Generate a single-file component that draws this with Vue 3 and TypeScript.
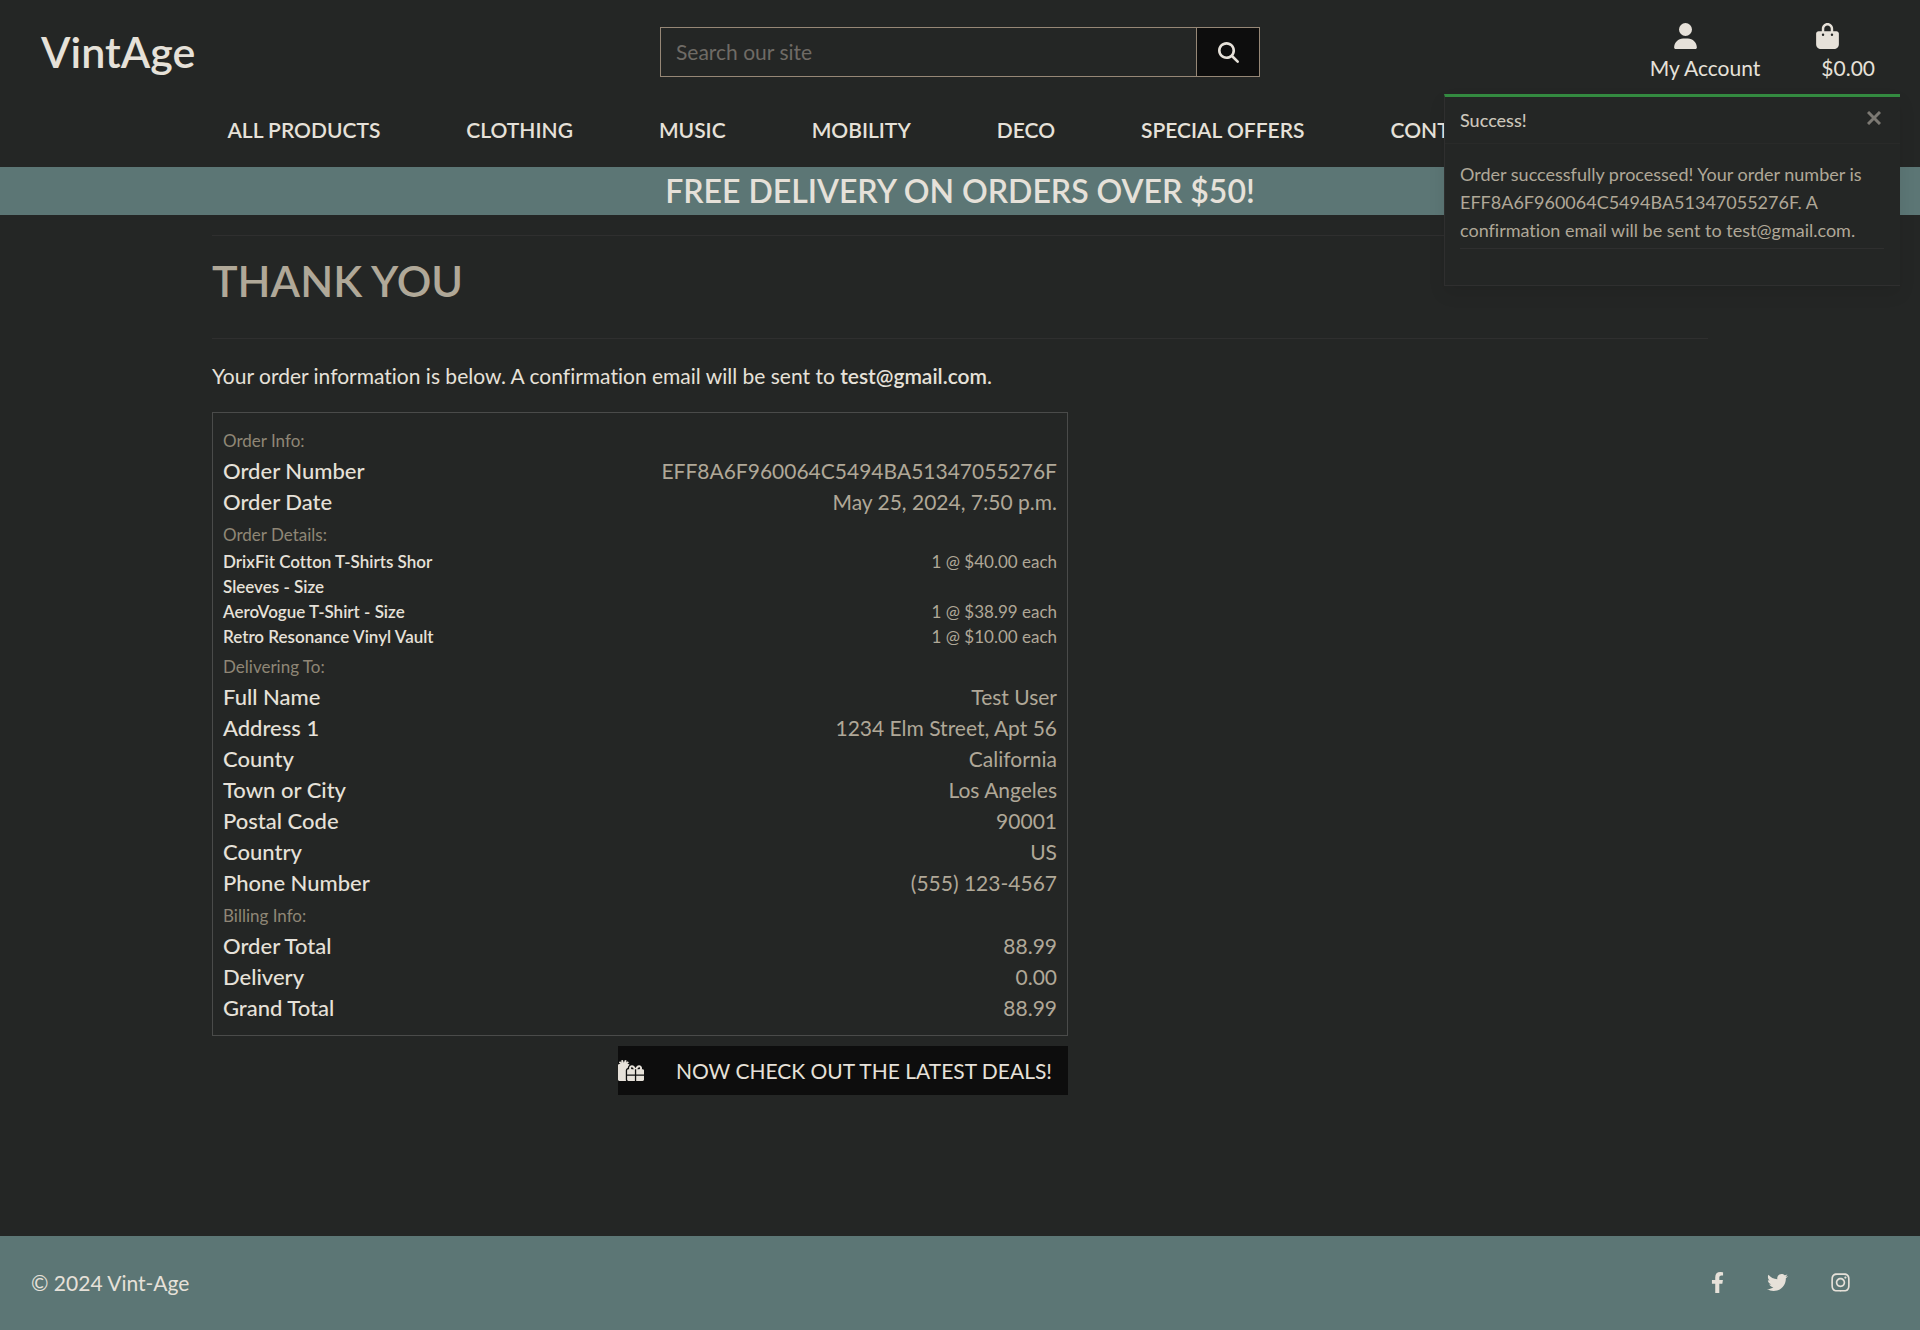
<script setup lang="ts">
import { ref } from 'vue'

interface Entry {
  label: string
  value: string
}

interface Section {
  title: string
  small?: boolean
  entries: Entry[]
}

const orderNumber = 'EFF8A6F960064C5494BA51347055276F'
const email = 'test@gmail.com'
const query = ref('')
const toastOpen = ref(true)

const navItems: string[] = [
  'All Products',
  'Clothing',
  'Music',
  'Mobility',
  'Deco',
  'Special Offers',
  'Contact',
]

const sections: Section[] = [
  {
    title: 'Order Info:',
    entries: [
      { label: 'Order Number', value: orderNumber },
      { label: 'Order Date', value: 'May 25, 2024, 7:50 p.m.' },
    ],
  },
  {
    title: 'Order Details:',
    small: true,
    entries: [
      { label: 'DrixFit Cotton T-Shirts Shor Sleeves - Size', value: '1 @ $40.00 each' },
      { label: 'AeroVogue T-Shirt - Size', value: '1 @ $38.99 each' },
      { label: 'Retro Resonance Vinyl Vault', value: '1 @ $10.00 each' },
    ],
  },
  {
    title: 'Delivering To:',
    entries: [
      { label: 'Full Name', value: 'Test User' },
      { label: 'Address 1', value: '1234 Elm Street, Apt 56' },
      { label: 'County', value: 'California' },
      { label: 'Town or City', value: 'Los Angeles' },
      { label: 'Postal Code', value: '90001' },
      { label: 'Country', value: 'US' },
      { label: 'Phone Number', value: '(555) 123-4567' },
    ],
  },
  {
    title: 'Billing Info:',
    entries: [
      { label: 'Order Total', value: '88.99' },
      { label: 'Delivery', value: '0.00' },
      { label: 'Grand Total', value: '88.99' },
    ],
  },
]
</script>

<template>
  <div class="page">
    <header class="header">
      <div class="topbar">
        <a class="logo" href="#">VintAge</a>

        <form class="search" role="search" @submit.prevent>
          <input v-model="query" class="search-input" type="text" placeholder="Search our site" aria-label="Search our site" />
          <button class="search-button" type="submit" aria-label="Search">
            <svg viewBox="0 0 512 512" width="21" height="21" fill="currentColor" aria-hidden="true">
              <path d="M416 208c0 45.9-14.9 88.3-40 122.7L502.6 457.4c12.5 12.5 12.5 32.8 0 45.3s-32.8 12.5-45.3 0L330.7 376c-34.4 25.2-76.8 40-122.7 40C93.1 416 0 322.9 0 208S93.1 0 208 0S416 93.1 416 208zM208 352a144 144 0 1 0 0-288 144 144 0 1 0 0 288z" />
            </svg>
          </button>
        </form>

        <div class="account">
          <a class="account-link" href="#">
            <svg viewBox="0 0 448 512" width="23" height="26" fill="currentColor" aria-hidden="true">
              <path d="M224 256A128 128 0 1 0 224 0a128 128 0 1 0 0 256zm-45.7 48C79.8 304 0 383.8 0 482.3C0 498.7 13.3 512 29.7 512H418.3c16.4 0 29.7-13.3 29.7-29.7C448 383.8 368.2 304 269.7 304H178.3z" />
            </svg>
            <span class="account-text">My Account</span>
          </a>
          <a class="account-link bag-link" href="#">
            <svg viewBox="0 0 448 512" width="23" height="26" fill="currentColor" aria-hidden="true">
              <path d="M160 112c0-35.3 28.7-64 64-64s64 28.7 64 64v48H160V112zm-48 48H48c-26.5 0-48 21.5-48 48V416c0 53 43 96 96 96H352c53 0 96-43 96-96V208c0-26.5-21.5-48-48-48H336V112C336 50.1 285.9 0 224 0S112 50.1 112 112v48zm24 48a24 24 0 1 1 0 48 24 24 0 1 1 0-48zm152 24a24 24 0 1 1 48 0 24 24 0 1 1 -48 0z" />
            </svg>
            <span class="account-text">$0.00</span>
          </a>
        </div>
      </div>

      <nav class="nav" aria-label="Main">
        <a v-for="item in navItems" :key="item" class="nav-link" href="#">{{ item }}</a>
      </nav>

      <section v-if="toastOpen" class="toast" role="status">
        <div class="toast-header">
          <strong class="toast-title">Success!</strong>
          <button class="toast-close" type="button" aria-label="Close" @click="toastOpen = false">
            <svg viewBox="0 0 14 14" width="14" height="14" fill="none" stroke="currentColor" stroke-width="3" aria-hidden="true">
              <path d="M1 1l12 12M13 1L1 13" />
            </svg>
          </button>
        </div>
        <div class="toast-body">
          <p class="toast-text">
            Order successfully processed! Your order number is {{ orderNumber }}. A confirmation email will be sent to {{ email }}.
          </p>
        </div>
      </section>
    </header>

    <div class="banner">
      <h2 class="banner-title">Free delivery on orders over $50!</h2>
    </div>

    <main class="main">
      <h1 class="title">Thank You</h1>
      <p class="intro">
        Your order information is below. A confirmation email will be sent to <strong>{{ email }}</strong>.
      </p>

      <div class="order">
        <div class="order-box">
          <section v-for="section in sections" :key="section.title" :class="{ small: section.small }">
            <h3 class="section-title">{{ section.title }}</h3>
            <dl class="entries">
              <div v-for="entry in section.entries" :key="entry.label" class="entry">
                <dt>{{ entry.label }}</dt>
                <dd>{{ entry.value }}</dd>
              </div>
            </dl>
          </section>
        </div>

        <a class="deals" href="#">
          <svg viewBox="0 0 640 512" width="26" height="21" fill="currentColor" aria-hidden="true">
            <path d="M240.6 194.1c1.9-30.8 17.3-61.2 44-79.8C279.4 103.5 268.7 96 256 96h-29.4l30.7-22c7.2-5.1 8.9-15.1 3.7-22.3l-9.3-13c-5.1-7.2-15.1-8.9-22.3-3.7l-32 22.9 11.5-30.6c3.1-8.3-1.1-17.5-9.4-20.6l-15-5.6c-8.3-3.1-17.5 1.1-20.6 9.4l-19.9 53-19.9-53.1C121 2.1 111.8-2.1 103.5 1l-15 5.6C80.2 9.7 76 19 79.2 27.2l11.5 30.6L58.7 35c-7.2-5.1-17.2-3.5-22.3 3.7l-9.3 13c-5.1 7.2-3.5 17.2 3.7 22.3l30.7 22H32c-17.7 0-32 14.3-32 32v352c0 17.7 14.3 32 32 32h168.9c-5.5-9.5-8.9-20.3-8.9-32V256c0-29.9 20.8-55 48.6-61.9zM224 480c0 17.7 14.3 32 32 32h160V384H224v96zm224 32h160c17.7 0 32-14.3 32-32v-96H448v128zm160-288h-20.4c2.6-7.6 4.4-15.5 4.4-23.8 0-35.5-27-72.2-72.1-72.2-48.1 0-75.9 47.7-87.9 75.3-12.1-27.6-39.9-75.3-87.9-75.3-45.1 0-72.1 36.7-72.1 72.2 0 8.3 1.7 16.2 4.4 23.8H256c-17.7 0-32 14.3-32 32v96h192V224h15.3l.7-.2.7.2H448v128h192v-96c0-17.7-14.3-32-32-32zm-272 0c-2.7-1.4-5.1-3-7.2-4.8-7.3-6.4-8.8-13.8-8.8-19 0-9.7 6.4-24.2 24.1-24.2 18.7 0 35.6 27.4 44.5 48H336zm199.2-4.8c-2.1 1.8-4.5 3.4-7.2 4.8h-52.6c8.8-20.3 25.8-48 44.5-48 17.7 0 24.1 14.5 24.1 24.2 0 5.2-1.5 12.6-8.8 19z" />
          </svg>
          <span>Now check out the latest deals!</span>
        </a>
      </div>
    </main>

    <footer class="footer">
      <p class="copyright">© 2024 Vint-Age</p>
      <div class="social">
        <a href="#" aria-label="Facebook">
          <svg viewBox="0 0 320 512" width="13" height="21" fill="currentColor" aria-hidden="true">
            <path d="M279.14 288l14.22-92.66h-88.91v-60.13c0-25.35 12.42-50.06 52.24-50.06h40.42V6.26S260.43 0 225.36 0c-73.22 0-121.08 44.38-121.08 124.72v70.62H22.89V288h81.39v224h100.17V288z" />
          </svg>
        </a>
        <a href="#" aria-label="Twitter">
          <svg viewBox="0 0 512 512" width="21" height="21" fill="currentColor" aria-hidden="true">
            <path d="M459.37 151.716c.325 4.548.325 9.097.325 13.645 0 138.72-105.583 298.558-298.558 298.558-59.452 0-114.68-17.219-161.137-47.106 8.447.974 16.568 1.299 25.34 1.299 49.055 0 94.213-16.568 130.274-44.832-46.132-.975-84.792-31.188-98.112-72.772 6.498.974 12.995 1.624 19.818 1.624 9.421 0 18.843-1.3 27.614-3.573-48.081-9.747-84.143-51.98-84.143-102.985v-1.299c13.969 7.797 30.214 12.67 47.431 13.319-28.264-18.843-46.781-51.005-46.781-87.391 0-19.492 5.197-37.36 14.294-52.954 51.655 63.675 129.3 105.258 216.365 109.807-1.624-7.797-2.599-15.918-2.599-24.04 0-57.828 46.782-104.934 104.934-104.934 30.213 0 57.502 12.67 76.67 33.137 23.715-4.548 46.456-13.32 66.599-25.34-7.798 24.366-24.366 44.833-46.132 57.827 21.117-2.273 41.584-8.122 60.426-16.243-14.292 20.791-32.161 39.308-52.628 54.253z" />
          </svg>
        </a>
        <a href="#" aria-label="Instagram">
          <svg viewBox="0 0 448 512" width="19" height="21" fill="currentColor" aria-hidden="true">
            <path d="M224.1 141c-63.6 0-114.9 51.3-114.9 114.9s51.3 114.9 114.9 114.9S339 319.5 339 255.9 287.7 141 224.1 141zm0 189.6c-41.1 0-74.7-33.5-74.7-74.7s33.5-74.7 74.7-74.7 74.7 33.5 74.7 74.7-33.6 74.7-74.7 74.7zm146.4-194.3c0 14.9-12 26.8-26.8 26.8-14.9 0-26.8-12-26.8-26.8s12-26.8 26.8-26.8 26.8 12 26.8 26.8zm76.1 27.2c-1.7-35.9-9.9-67.7-36.2-93.9-26.2-26.2-58-34.4-93.9-36.2-37-2.1-147.9-2.1-184.9 0-35.8 1.7-67.6 9.9-93.9 36.1s-34.4 58-36.2 93.9c-2.1 37-2.1 147.9 0 184.9 1.7 35.9 9.9 67.7 36.2 93.9s58 34.4 93.9 36.2c37 2.1 147.9 2.1 184.9 0 35.9-1.7 67.7-9.9 93.9-36.2 26.2-26.2 34.4-58 36.2-93.9 2.1-37 2.1-147.8 0-184.8zM398.8 388c-7.8 19.6-22.9 34.7-42.6 42.6-29.5 11.7-99.5 9-132.1 9s-102.7 2.6-132.1-9c-19.6-7.8-34.7-22.9-42.6-42.6-11.7-29.5-9-99.5-9-132.1s-2.6-102.7 9-132.1c7.8-19.6 22.9-34.7 42.6-42.6 29.5-11.7 99.5-9 132.1-9s102.7-2.6 132.1 9c19.6 7.8 34.7 22.9 42.6 42.6 11.7 29.5 9 99.5 9 132.1s2.7 102.7-9 132.1z" />
          </svg>
        </a>
      </div>
    </footer>
  </div>
</template>

<style>
body {
  margin: 0;
  background: #242625;
}
</style>

<style scoped>
.page {
  --cream: #e6e1d9;
  --taupe: #b0a898;
  --muted: #8f8676;
  --teal: #5c7675;
  --ink: #0d0d0d;
  --hairline: #2f2f2f;
  display: flex;
  flex-direction: column;
  min-height: 100vh;
  background: #242625;
  color: var(--cream);
  font-family: Lato, 'Liberation Sans', sans-serif;
  font-size: 21px;
  font-variant-ligatures: no-common-ligatures;
  line-height: 31px;
}

*,
*::before,
*::after {
  box-sizing: border-box;
}

a {
  color: inherit;
  text-decoration: none;
}

h1,
h2,
h3,
p,
dl,
dd {
  margin: 0;
}

svg {
  display: block;
  flex: none;
}

.header {
  position: relative;
}

.topbar {
  display: grid;
  grid-template-columns: 1fr minmax(0, 600px) 1fr;
  align-items: center;
  height: 104px;
  padding: 0 41px;
}

.logo {
  font-size: 43px;
  font-weight: 600;
  line-height: 54px;
}

.search {
  display: flex;
  height: 50px;
  border: 1px solid #968776;
}

.search-input {
  flex: 1;
  min-width: 0;
  padding: 0 15px 2px;
  border: 0;
  background: transparent;
  color: var(--cream);
  font: inherit;
  outline: none;
}

.search-input::placeholder {
  color: #6f6b65;
  opacity: 1;
}

.search-button {
  display: flex;
  align-items: center;
  justify-content: center;
  width: 63px;
  padding: 0;
  border: 0;
  border-left: 1px solid #968776;
  background: var(--ink);
  color: var(--cream);
  cursor: pointer;
}

.account {
  display: flex;
  justify-content: flex-end;
  gap: 56px;
  padding: 2px 4px 0 0;
}

.account-link {
  display: flex;
  flex-direction: column;
  gap: 3px;
}

.account-link svg {
  margin-left: 24px;
}

.bag-link svg {
  margin-left: 0;
}

.bag-link .account-text {
  padding-left: 5px;
}

.nav {
  display: flex;
  gap: 86px;
  height: 63px;
  padding: 10px 12% 0;
  margin-left: -3px;
  overflow: hidden;
}

.nav-link {
  font-weight: 600;
  text-transform: uppercase;
  white-space: nowrap;
}

.toast {
  position: absolute;
  top: 94px;
  right: 20px;
  z-index: 2;
  width: 456px;
  border: 1px solid var(--hairline);
  border-top: 3px solid #338a40;
  border-right: 0;
  background: #242625;
  box-shadow: 0 8px 16px rgba(0, 0, 0, 0.08);
  color: var(--taupe);
  font-size: 18px;
  line-height: 28px;
}

.toast-header {
  display: flex;
  justify-content: space-between;
  align-items: flex-start;
  height: 47px;
  padding: 9px 19px 0 15px;
  border-bottom: 1px solid #292a29;
}

.toast-title {
  color: #cbc5ba;
  font-weight: 500;
}

.toast-close {
  padding: 5px 0;
  border: 0;
  background: transparent;
  color: #7c7973;
  cursor: pointer;
}

.toast-body {
  padding: 16px 16px 36px 15px;
}

.toast-text {
  padding-bottom: 4px;
  border-bottom: 1px solid var(--hairline);
}

.banner {
  padding: 5px 16px;
  background: var(--teal);
  text-align: center;
}

.banner-title {
  font-size: 32px;
  font-weight: 600;
  line-height: 38px;
  text-transform: uppercase;
}

.main {
  flex: 1;
  width: 90%;
  max-width: 1496px;
  margin: 0 auto;
  padding: 20px 0 60px;
}

.title {
  padding: 18px 0 30px;
  border: solid var(--hairline);
  border-width: 1px 0;
  color: var(--taupe);
  font-size: 43px;
  font-weight: 600;
  line-height: 54px;
  text-transform: uppercase;
}

.intro {
  padding: 21px 0;
}

.intro strong {
  font-weight: 600;
}

.order {
  display: flex;
  flex-direction: column;
  align-items: flex-end;
  gap: 10px;
  max-width: 856px;
}

.order-box {
  width: 100%;
  padding: 10px 10px 12px;
  border: 1px solid #4a4b4a;
}

.section-title {
  padding: 5px 0 2px;
  color: var(--muted);
  font-size: 17px;
  font-weight: 400;
  line-height: 25px;
}

.entry {
  display: flex;
  justify-content: space-between;
}

.entry dt {
  width: 31%;
  font-size: 22px;
  font-weight: 500;
}

.entry dd {
  color: var(--taupe);
  text-align: right;
}

.small .entry {
  line-height: 25px;
}

.small dt,
.small dd {
  font-size: 17px;
}

.small dt {
  font-weight: 600;
}

.deals {
  display: flex;
  align-items: center;
  justify-content: space-between;
  width: 450px;
  max-width: 100%;
  height: 49px;
  padding-right: 16px;
  background: var(--ink);
  text-transform: uppercase;
}

.footer {
  display: flex;
  align-items: center;
  justify-content: space-between;
  padding: 31px 70px 32px 31px;
  background: var(--teal);
}

.social {
  display: flex;
  align-items: center;
  gap: 43px;
}
</style>
